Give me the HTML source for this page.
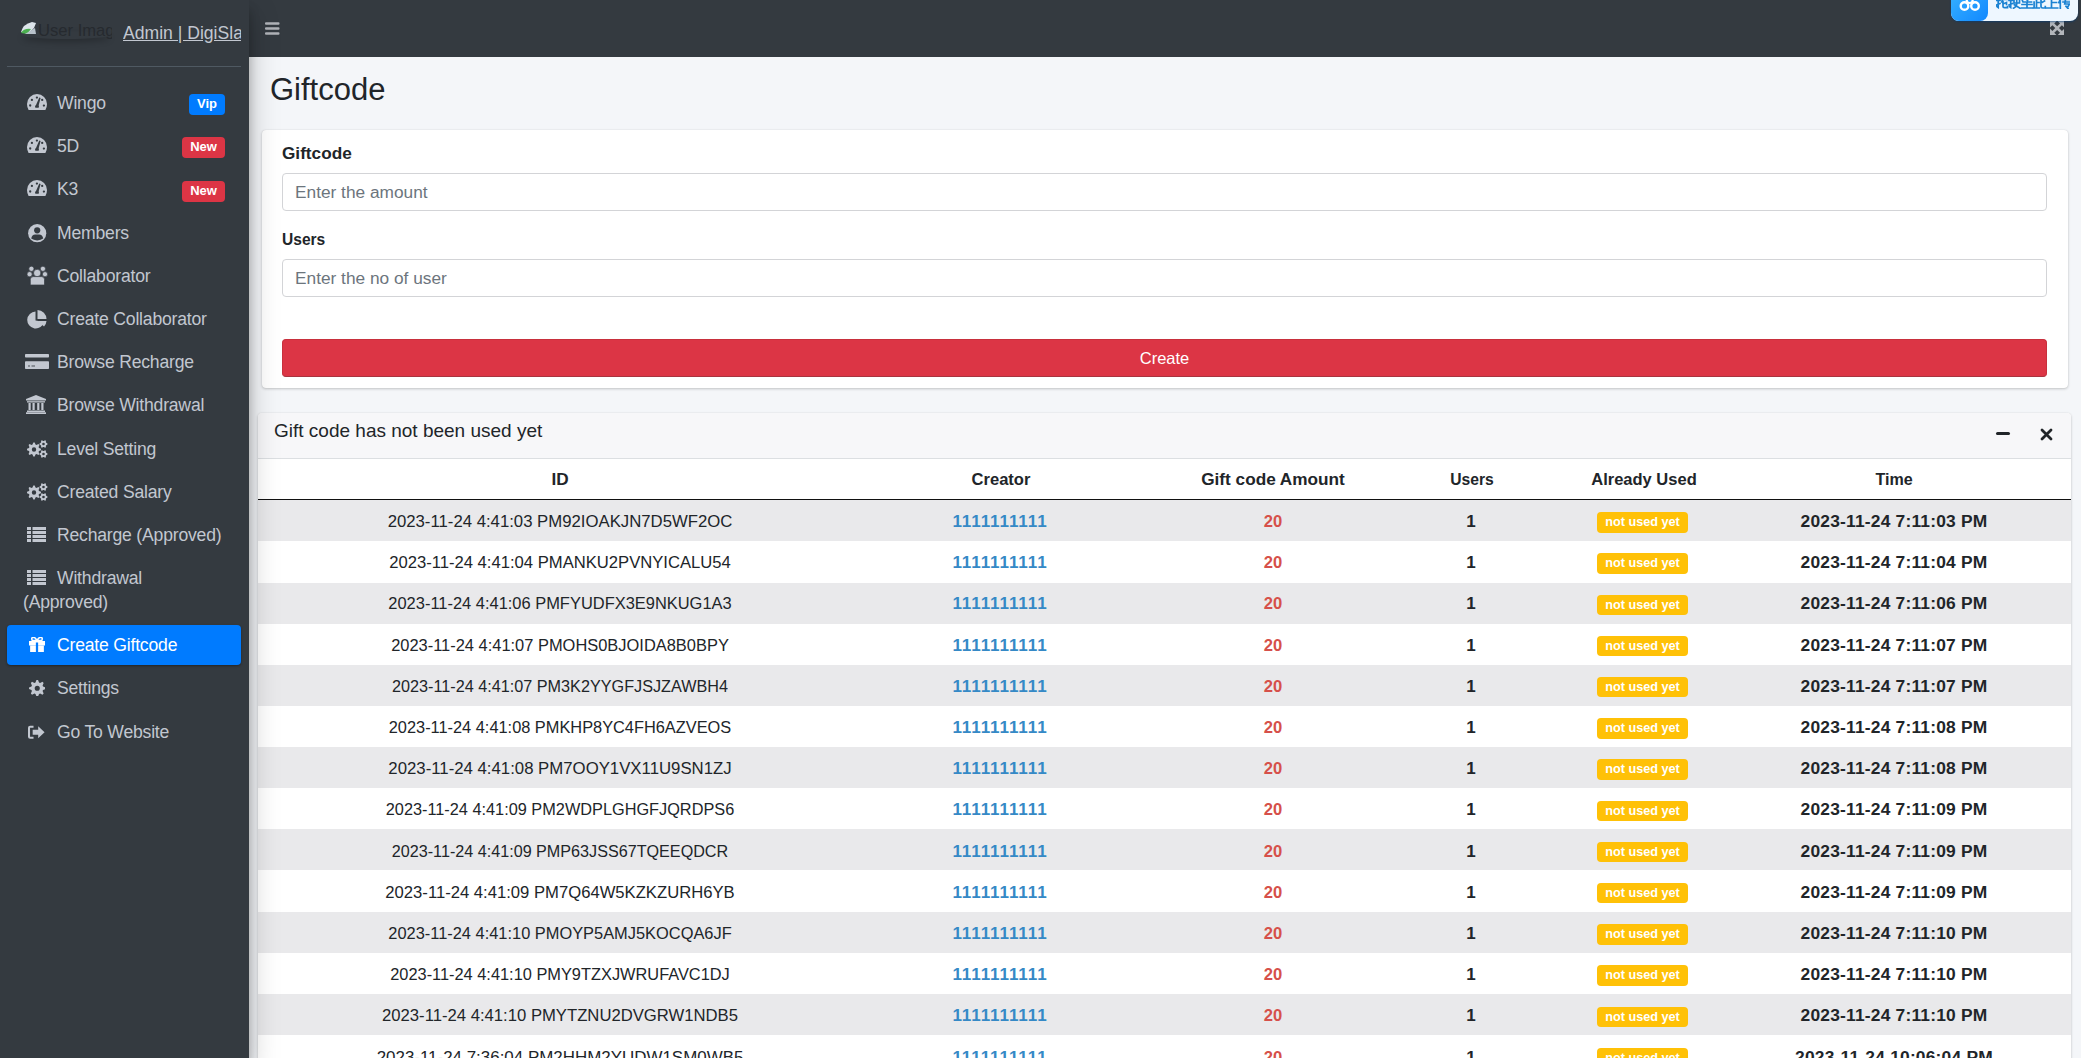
<!DOCTYPE html>
<html><head><meta charset="utf-8">
<style>
*{box-sizing:border-box;margin:0;padding:0}
html,body{width:2081px;height:1058px;overflow:hidden;background:#f4f6f9;font-family:"Liberation Sans",sans-serif;position:relative}
.abs{position:absolute}
#sidebar{position:absolute;left:0;top:0;width:249px;height:1058px;background:#343a40;box-shadow:0 14px 28px rgba(0,0,0,.25),0 10px 10px rgba(0,0,0,.22);z-index:3}
#navbar{position:absolute;left:249px;top:0;width:1832px;height:57px;background:#343a40;z-index:2}
.sbt{position:absolute;left:57px;height:24px;line-height:24px;font-size:17.6px;letter-spacing:-0.2px;color:#c2c7d0;white-space:nowrap}
.badge{position:absolute;font-weight:bold;color:#fff;border-radius:4px;text-align:center}
.card{position:absolute;background:#fff;border-radius:4px;box-shadow:0 0 1px rgba(0,0,0,.125),0 1px 3px rgba(0,0,0,.2)}
.lbl{position:absolute;font-weight:bold;font-size:17.2px;color:#212529;line-height:22px;white-space:nowrap}
.inp{position:absolute;border:1px solid #d3d4d7;border-radius:4px;background:#fff}
.ph{position:absolute;left:12px;top:0;line-height:36px;font-size:17.3px;color:#6c757d;white-space:nowrap}
.th{position:absolute;top:46px;width:300px;height:41px;line-height:41px;text-align:center;font-weight:bold;font-size:17.2px;color:#212529;white-space:nowrap}
.td{position:absolute;width:300px;height:41px;line-height:41px;text-align:center;font-size:16.7px;color:#212529;white-space:nowrap}
.cr{color:#3589c6;font-weight:bold;font-size:17px;letter-spacing:0.9px}
.am{color:#d6504a;font-weight:bold;font-size:16.6px}
.us{font-weight:bold;font-size:17px}
.tm{font-weight:bold;font-size:17.4px;letter-spacing:0.2px}
.yb{position:absolute;width:91px;height:20.5px;line-height:21px;background:#ffc107;color:#fff;font-weight:bold;font-size:12.7px;border-radius:4px;text-align:center;white-space:nowrap}
</style></head>
<body>
<div id="sidebar">
  <div class="abs" style="left:22px;top:31px;width:88px;height:8px;border-radius:50%;box-shadow:0 3px 6px rgba(0,0,0,.25);"></div>
  <svg class="abs" style="left:20px;top:21px" width="17" height="14" viewBox="0 0 17 14"><path d="M1 11 Q3 3 12 1 L16 2 L14 7 L8 13 Z" fill="#dde4ea"/><path d="M1 12 Q4 7 11 8 L7 13 Z" fill="#4caf50"/><path d="M5 13 L15 7 L16 13 Z" fill="#b8c2cb"/></svg>
  <div class="abs" style="left:38px;top:19px;font-size:16.6px;line-height:24px;color:#262a2f;white-space:nowrap;width:74px;overflow:hidden">User Image</div>
  <div class="abs" style="left:123px;top:21px;font-size:17.6px;line-height:24px;color:#c2c7d0;text-decoration:underline;white-space:nowrap;width:118px;overflow:hidden">Admin | DigiSlash</div>
  <div class="abs" style="left:7px;top:66px;width:234px;height:1px;background:#4f5962"></div>
  <svg class="abs" style="left:27px;top:94px" width="20" height="16" viewBox="0 0 20 16">
<path d="M1.6 16 Q0 13.2 0 10 A10 10 0 0 1 20 10 Q20 13.2 18.4 16 Z" fill="#c2c7d0"/>
<circle cx="3.2" cy="11.5" r="1.15" fill="#343a40"/><circle cx="4.9" cy="5.9" r="1.15" fill="#343a40"/><circle cx="9.9" cy="3.6" r="1.15" fill="#343a40"/><circle cx="15.2" cy="5.9" r="1.15" fill="#343a40"/><circle cx="16.9" cy="11.6" r="1.15" fill="#343a40"/>
<path d="M8.6 12 L12.3 3.6 L13.6 4 L11.5 12Z" fill="#343a40"/><rect x="8.1" y="11.4" width="3.8" height="2.3" rx="0.6" fill="#343a40"/></svg><div class="sbt" style="top:91px;color:#c2c7d0">Wingo</div><div class="badge" style="left:189px;top:94px;width:36px;height:21px;line-height:19px;background:#007bff;font-size:13px">Vip</div><svg class="abs" style="left:27px;top:137px" width="20" height="16" viewBox="0 0 20 16">
<path d="M1.6 16 Q0 13.2 0 10 A10 10 0 0 1 20 10 Q20 13.2 18.4 16 Z" fill="#c2c7d0"/>
<circle cx="3.2" cy="11.5" r="1.15" fill="#343a40"/><circle cx="4.9" cy="5.9" r="1.15" fill="#343a40"/><circle cx="9.9" cy="3.6" r="1.15" fill="#343a40"/><circle cx="15.2" cy="5.9" r="1.15" fill="#343a40"/><circle cx="16.9" cy="11.6" r="1.15" fill="#343a40"/>
<path d="M8.6 12 L12.3 3.6 L13.6 4 L11.5 12Z" fill="#343a40"/><rect x="8.1" y="11.4" width="3.8" height="2.3" rx="0.6" fill="#343a40"/></svg><div class="sbt" style="top:134px;color:#c2c7d0">5D</div><div class="badge" style="left:182px;top:137px;width:43px;height:21px;line-height:19px;background:#dc3545;font-size:13px">New</div><svg class="abs" style="left:27px;top:180px" width="20" height="16" viewBox="0 0 20 16">
<path d="M1.6 16 Q0 13.2 0 10 A10 10 0 0 1 20 10 Q20 13.2 18.4 16 Z" fill="#c2c7d0"/>
<circle cx="3.2" cy="11.5" r="1.15" fill="#343a40"/><circle cx="4.9" cy="5.9" r="1.15" fill="#343a40"/><circle cx="9.9" cy="3.6" r="1.15" fill="#343a40"/><circle cx="15.2" cy="5.9" r="1.15" fill="#343a40"/><circle cx="16.9" cy="11.6" r="1.15" fill="#343a40"/>
<path d="M8.6 12 L12.3 3.6 L13.6 4 L11.5 12Z" fill="#343a40"/><rect x="8.1" y="11.4" width="3.8" height="2.3" rx="0.6" fill="#343a40"/></svg><div class="sbt" style="top:177px;color:#c2c7d0">K3</div><div class="badge" style="left:182px;top:181px;width:43px;height:21px;line-height:19px;background:#dc3545;font-size:13px">New</div><svg class="abs" style="left:27.8px;top:223.6px" width="19" height="19" viewBox="0 0 19 19">
<circle cx="9.2" cy="9.2" r="9.1" fill="#c2c7d0"/><circle cx="9.2" cy="6.3" r="3.1" fill="#343a40"/>
<path d="M3.2 14.6 Q4 10.5 7.2 10.5 L11.2 10.5 Q14.4 10.5 15.2 14.6 Q13 16.4 9.2 16.4 Q5.4 16.4 3.2 14.6Z" fill="#343a40"/></svg><div class="sbt" style="top:221px;color:#c2c7d0">Members</div><svg class="abs" style="left:26.7px;top:266.2px" width="21" height="19" viewBox="0 0 21 19">
<g stroke="#343a40" stroke-width="0.7" fill="#c2c7d0">
<circle cx="4.4" cy="2.8" r="2.6"/><circle cx="15.9" cy="2.8" r="2.6"/>
<circle cx="2.6" cy="8.2" r="2.6"/><circle cx="18.0" cy="8.2" r="2.6"/>
<circle cx="10.2" cy="7.0" r="3.7"/>
<path d="M3.3 19 L3.3 13.5 Q3.3 10.6 6.3 10.6 L14.5 10.6 Q17.5 10.6 17.5 13.5 L17.5 19Z"/></g></svg><div class="sbt" style="top:264px;color:#c2c7d0">Collaborator</div><svg class="abs" style="left:27px;top:310px" width="20" height="19" viewBox="0 0 20 19">
<path d="M8.5 1.5 L8.5 10.5 L17 12 A8.5 8.5 0 1 1 8.5 1.5Z" fill="#c2c7d0"/>
<path d="M10.5 0 A9 9 0 0 1 19.5 9 L10.5 9Z" fill="#c2c7d0"/><path d="M11 11 L19.5 11 A9 9 0 0 1 17 16.5Z" fill="#c2c7d0"/></svg><div class="sbt" style="top:307px;color:#c2c7d0">Create Collaborator</div><svg class="abs" style="left:25px;top:354.2px" width="24" height="16" viewBox="0 0 24 16">
<rect x="0" y="0" width="24" height="3.6" rx="0.8" fill="#c2c7d0"/><rect x="0" y="7.2" width="24" height="7.8" rx="0.8" fill="#c2c7d0"/>
<rect x="3" y="11.4" width="2" height="1.2" fill="#343a40" opacity="0.7"/><rect x="6.5" y="11.4" width="3.5" height="1.2" fill="#343a40" opacity="0.7"/></svg><div class="sbt" style="top:350px;color:#c2c7d0">Browse Recharge</div><svg class="abs" style="left:26px;top:395.2px" width="20" height="19" viewBox="0 0 20 19">
<path d="M10 0 L20 4 L20 5.5 L0 5.5 L0 4Z" fill="#c2c7d0"/><rect x="1" y="6.2" width="18" height="1.3" fill="#c2c7d0"/>
<rect x="2.5" y="8" width="2.2" height="7" fill="#c2c7d0"/><rect x="6.5" y="8" width="2.2" height="7" fill="#c2c7d0"/><rect x="11.2" y="8" width="2.2" height="7" fill="#c2c7d0"/><rect x="15.3" y="8" width="2.2" height="7" fill="#c2c7d0"/>
<rect x="1" y="15.5" width="18" height="1.5" fill="#c2c7d0"/><rect x="0" y="17.3" width="20" height="1.7" fill="#c2c7d0"/></svg><div class="sbt" style="top:393px;color:#c2c7d0">Browse Withdrawal</div><svg class="abs" style="left:27px;top:440px" width="21" height="18" viewBox="0 0 21 18">
<path fill-rule="evenodd" d="M13.97 8.81 L13.97 10.19 L11.98 11.01 L11.59 11.95 L12.41 13.94 L11.44 14.91 L9.45 14.09 L8.51 14.48 L7.69 16.47 L6.31 16.47 L5.49 14.48 L4.55 14.09 L2.56 14.91 L1.59 13.94 L2.41 11.95 L2.02 11.01 L0.03 10.19 L0.03 8.81 L2.02 7.99 L2.41 7.05 L1.59 5.06 L2.56 4.09 L4.55 4.91 L5.49 4.52 L6.31 2.53 L7.69 2.53 L8.51 4.52 L9.45 4.91 L11.44 4.09 L12.41 5.06 L11.59 7.05 L11.98 7.99Z M9.20 9.50 A2.2 2.2 0 1 0 4.80 9.50 A2.2 2.2 0 1 0 9.20 9.50Z" fill="#c2c7d0"/>
<path fill-rule="evenodd" d="M20.47 3.48 L20.47 4.52 L19.27 5.15 L18.88 5.83 L18.94 7.17 L18.03 7.70 L16.89 6.97 L16.11 6.97 L14.97 7.70 L14.06 7.17 L14.12 5.83 L13.73 5.15 L12.53 4.52 L12.53 3.48 L13.73 2.85 L14.12 2.17 L14.06 0.83 L14.97 0.30 L16.11 1.03 L16.89 1.03 L18.03 0.30 L18.94 0.83 L18.88 2.17 L19.27 2.85Z M17.80 4.00 A1.3 1.3 0 1 0 15.20 4.00 A1.3 1.3 0 1 0 17.80 4.00Z" fill="#c2c7d0"/>
<path fill-rule="evenodd" d="M20.47 13.48 L20.47 14.52 L19.27 15.15 L18.88 15.83 L18.94 17.17 L18.03 17.70 L16.89 16.97 L16.11 16.97 L14.97 17.70 L14.06 17.17 L14.12 15.83 L13.73 15.15 L12.53 14.52 L12.53 13.48 L13.73 12.85 L14.12 12.17 L14.06 10.83 L14.97 10.30 L16.11 11.03 L16.89 11.03 L18.03 10.30 L18.94 10.83 L18.88 12.17 L19.27 12.85Z M17.80 14.00 A1.3 1.3 0 1 0 15.20 14.00 A1.3 1.3 0 1 0 17.80 14.00Z" fill="#c2c7d0"/></svg><div class="sbt" style="top:437px;color:#c2c7d0">Level Setting</div><svg class="abs" style="left:27px;top:483px" width="21" height="18" viewBox="0 0 21 18">
<path fill-rule="evenodd" d="M13.97 8.81 L13.97 10.19 L11.98 11.01 L11.59 11.95 L12.41 13.94 L11.44 14.91 L9.45 14.09 L8.51 14.48 L7.69 16.47 L6.31 16.47 L5.49 14.48 L4.55 14.09 L2.56 14.91 L1.59 13.94 L2.41 11.95 L2.02 11.01 L0.03 10.19 L0.03 8.81 L2.02 7.99 L2.41 7.05 L1.59 5.06 L2.56 4.09 L4.55 4.91 L5.49 4.52 L6.31 2.53 L7.69 2.53 L8.51 4.52 L9.45 4.91 L11.44 4.09 L12.41 5.06 L11.59 7.05 L11.98 7.99Z M9.20 9.50 A2.2 2.2 0 1 0 4.80 9.50 A2.2 2.2 0 1 0 9.20 9.50Z" fill="#c2c7d0"/>
<path fill-rule="evenodd" d="M20.47 3.48 L20.47 4.52 L19.27 5.15 L18.88 5.83 L18.94 7.17 L18.03 7.70 L16.89 6.97 L16.11 6.97 L14.97 7.70 L14.06 7.17 L14.12 5.83 L13.73 5.15 L12.53 4.52 L12.53 3.48 L13.73 2.85 L14.12 2.17 L14.06 0.83 L14.97 0.30 L16.11 1.03 L16.89 1.03 L18.03 0.30 L18.94 0.83 L18.88 2.17 L19.27 2.85Z M17.80 4.00 A1.3 1.3 0 1 0 15.20 4.00 A1.3 1.3 0 1 0 17.80 4.00Z" fill="#c2c7d0"/>
<path fill-rule="evenodd" d="M20.47 13.48 L20.47 14.52 L19.27 15.15 L18.88 15.83 L18.94 17.17 L18.03 17.70 L16.89 16.97 L16.11 16.97 L14.97 17.70 L14.06 17.17 L14.12 15.83 L13.73 15.15 L12.53 14.52 L12.53 13.48 L13.73 12.85 L14.12 12.17 L14.06 10.83 L14.97 10.30 L16.11 11.03 L16.89 11.03 L18.03 10.30 L18.94 10.83 L18.88 12.17 L19.27 12.85Z M17.80 14.00 A1.3 1.3 0 1 0 15.20 14.00 A1.3 1.3 0 1 0 17.80 14.00Z" fill="#c2c7d0"/></svg><div class="sbt" style="top:480px;color:#c2c7d0">Created Salary</div><svg class="abs" style="left:27px;top:527px" width="19" height="15" viewBox="0 0 19 15"><rect x="0" y="0" width="4" height="3" fill="#c2c7d0"/><rect x="5.5" y="0" width="13.5" height="3" fill="#c2c7d0"/><rect x="0" y="4" width="4" height="3" fill="#c2c7d0"/><rect x="5.5" y="4" width="13.5" height="3" fill="#c2c7d0"/><rect x="0" y="8" width="4" height="3" fill="#c2c7d0"/><rect x="5.5" y="8" width="13.5" height="3" fill="#c2c7d0"/><rect x="0" y="12" width="4" height="3" fill="#c2c7d0"/><rect x="5.5" y="12" width="13.5" height="3" fill="#c2c7d0"/></svg><div class="sbt" style="top:523px;color:#c2c7d0">Recharge (Approved)</div><svg class="abs" style="left:27px;top:570px" width="19" height="15" viewBox="0 0 19 15"><rect x="0" y="0" width="4" height="3" fill="#c2c7d0"/><rect x="5.5" y="0" width="13.5" height="3" fill="#c2c7d0"/><rect x="0" y="4" width="4" height="3" fill="#c2c7d0"/><rect x="5.5" y="4" width="13.5" height="3" fill="#c2c7d0"/><rect x="0" y="8" width="4" height="3" fill="#c2c7d0"/><rect x="5.5" y="8" width="13.5" height="3" fill="#c2c7d0"/><rect x="0" y="12" width="4" height="3" fill="#c2c7d0"/><rect x="5.5" y="12" width="13.5" height="3" fill="#c2c7d0"/></svg><div class="sbt" style="top:566px;color:#c2c7d0">Withdrawal</div><div class="sbt" style="left:23px;top:590px">(Approved)</div><div class="abs" style="left:7px;top:625px;width:234px;height:40px;background:#007bff;border-radius:4px;box-shadow:0 1px 3px rgba(0,0,0,.12),0 1px 2px rgba(0,0,0,.24)"></div><svg class="abs" style="left:29px;top:637px" width="16" height="15" viewBox="0 0 17 15" preserveAspectRatio="none">
<path d="M3.5 3.6 Q2 0.5 4.5 0.3 Q6.8 0.3 8.5 3.6Z M13.5 3.6 Q15 0.5 12.5 0.3 Q10.2 0.3 8.5 3.6Z" fill="none" stroke="#fff" stroke-width="1.6"/>
<rect x="0" y="4" width="17" height="4.5" fill="#fff"/><rect x="1.2" y="8.5" width="14.6" height="6.5" fill="#fff"/>
<rect x="7.3" y="5.5" width="2.4" height="9.5" fill="#007bff"/></svg><div class="sbt" style="top:633px;color:#fff">Create Giftcode</div><svg class="abs" style="left:28.6px;top:679.8px" width="16.5" height="16.5" viewBox="0 0 18 18">
<path fill-rule="evenodd" d="M17.96 8.12 L17.96 9.88 L15.32 10.92 L14.82 12.11 L15.96 14.71 L14.71 15.96 L12.11 14.82 L10.92 15.32 L9.88 17.96 L8.12 17.96 L7.08 15.32 L5.89 14.82 L3.29 15.96 L2.04 14.71 L3.18 12.11 L2.68 10.92 L0.04 9.88 L0.04 8.12 L2.68 7.08 L3.18 5.89 L2.04 3.29 L3.29 2.04 L5.89 3.18 L7.08 2.68 L8.12 0.04 L9.88 0.04 L10.92 2.68 L12.11 3.18 L14.71 2.04 L15.96 3.29 L14.82 5.89 L15.32 7.08Z M11.80 9.00 A2.8 2.8 0 1 0 6.20 9.00 A2.8 2.8 0 1 0 11.80 9.00Z" fill="#c2c7d0"/></svg><div class="sbt" style="top:676px;color:#c2c7d0">Settings</div><svg class="abs" style="left:27.8px;top:724.6px" width="17" height="14.5" viewBox="0 0 20 16">
<path d="M6.5 1.5 L2.5 1.5 Q1.2 1.5 1.2 2.8 L1.2 13.2 Q1.2 14.5 2.5 14.5 L6.5 14.5" fill="none" stroke="#c2c7d0" stroke-width="2.4"/>
<path d="M12 1 L19.5 8 L12 15 L12 11 L5.5 11 L5.5 5 L12 5Z" fill="#c2c7d0"/></svg><div class="sbt" style="top:720px;color:#c2c7d0">Go To Website</div>
</div>
<div id="navbar">
  <svg class="abs" style="left:16px;top:21px" width="14.5" height="14" viewBox="0 0 14.5 14"><rect y="1.3" width="14.5" height="2.5" rx="1" fill="#b0b3b8"/><rect y="6.3" width="14.5" height="2.5" rx="1" fill="#b0b3b8"/><rect y="11.3" width="14.5" height="2.5" rx="1" fill="#b0b3b8"/></svg>
  <svg class="abs" style="left:1800.8px;top:20.9px" width="14.3" height="14.2" viewBox="0 0 14.3 14.2"><path fill="#b3b6bb" d="M0 0 L6.65 0 L4.25 2.4 L7.15 5.3 L10.05 2.4 L7.65 0 L14.3 0 L14.3 6.6 L11.9 4.2 L9 7.1 L11.9 10 L14.3 7.6 L14.3 14.2 L7.65 14.2 L10.05 11.8 L7.15 8.9 L4.25 11.8 L6.65 14.2 L0 14.2 L0 7.6 L2.4 10 L5.3 7.1 L2.4 4.2 L0 6.6Z"/></svg>
  <div class="abs" style="left:1702px;top:-12px;width:127px;height:33px;border-radius:8px;background:#eef7ff;box-shadow:0 1px 2px rgba(0,60,120,.6);overflow:hidden">
    <div class="abs" style="left:0;top:0;width:37px;height:33px;background:linear-gradient(135deg,#39b3ff,#1188ff);border-radius:0 0 8px 0"></div>
    <svg class="abs" style="left:8px;top:10px" width="22" height="14" viewBox="0 0 22 14"><circle cx="5.5" cy="8" r="3.8" fill="none" stroke="#fff" stroke-width="2.4"/><circle cx="16" cy="8" r="3.8" fill="none" stroke="#fff" stroke-width="2.4"/><circle cx="10.7" cy="2" r="3" fill="none" stroke="#fff" stroke-width="2.2"/></svg>
    <div class="abs" style="left:45px;top:11px;width:74px;height:10px;overflow:hidden">
      <svg style="display:block" width="74" height="10" viewBox="0 0 74 10"><g fill="none" stroke="#1b82d2" stroke-width="1.7" stroke-linecap="square">
<path d="M0.5 1.5H4 M2.2 -2V8.5L1 7.6 M0.5 6L4 4.5 M5.5 0.5H11.5 M7.5 -2L5.8 3 M7 2.5V7.5Q7 8.6 8.5 8.6H11.5V7.5 M7 5L10.5 3.5V5.5"/>
<path transform="translate(12.5 0)" d="M0.5 1.5H4 M2.2 -2V8.5L1 7.6 M0.5 6L4 4.5 M5.5 0V4H11V0 M8.2 -2V5 Q8 8 5 9.2 M5.8 5.8L11.5 9.2"/>
<path transform="translate(25 0)" d="M1 0.5L2 3H10.5 M4 -1L6.5 1.5 M1 5.5H11 M6 3V9 M0.5 9H11.5"/>
<path transform="translate(37.5 0)" d="M3 -2V9 M3 3.5H5.5 M0.6 3V9 M0 9H5.8 M7.5 -2V7.5Q7.5 9 9.2 9H11.8V7.5 M7.5 4L11 2"/>
<path transform="translate(50 0)" d="M5.5 -2V9 M5.5 3.5H10.5 M0.3 9H11.7"/>
<path transform="translate(62.5 0)" d="M2.5 -1L0.3 3.5 M1.8 2V9.5 M4.5 0.5H11.5 M4.5 3H11.5 M7.5 -2L6.2 5H11L9.5 7.5 M7.5 7.3L9.5 9.5"/>
</g></svg>
    </div>
  </div>
</div>
<div class="abs" style="left:270px;top:69px;font-size:31px;line-height:42px;color:#212529;white-space:nowrap">Giftcode</div>

<div class="card" style="left:261.5px;top:130px;width:1806px;height:257.6px">
  <div class="lbl" style="left:20.5px;top:11.5px">Giftcode</div>
  <div class="inp" style="left:20.5px;top:43px;width:1765px;height:38px"><div class="ph">Enter the amount</div></div>
  <div class="lbl" style="left:20.5px;top:97.5px;transform:scaleX(0.905);transform-origin:0 0">Users</div>
  <div class="inp" style="left:20.5px;top:129px;width:1765px;height:38px"><div class="ph">Enter the no of user</div></div>
  <div class="abs" style="left:20.5px;top:209px;width:1765px;height:38px;background:#dc3545;border:1px solid #c8303d;border-bottom-color:#a8343f;border-radius:4px;color:#fff;text-align:center;line-height:36px;font-size:16.5px">Create</div>
</div>

<div class="card" style="left:258px;top:412.5px;width:1813px;height:700px;overflow:hidden">
  <div class="abs" style="left:0;top:0;width:1813px;height:46px;background:#f7f7f9;border-bottom:1px solid #dcdfe2"></div>
  <div class="abs" style="left:16px;top:6px;font-size:19px;line-height:24px;color:#212529;white-space:nowrap">Gift code has not been used yet</div>
  <div class="abs" style="left:1738.4px;top:19.8px;width:14px;height:3.2px;border-radius:1.6px;background:#212529"></div>
  <svg class="abs" style="left:1782px;top:15.5px" width="13" height="13" viewBox="0 0 13 13"><path d="M2 2 L11 11 M11 2 L2 11" stroke="#212529" stroke-width="2.8" stroke-linecap="round"/></svg>
  <div class="th" style="left:152px;transform:scaleX(1.0)">ID</div><div class="th" style="left:593.0px;transform:scaleX(0.963)">Creator</div><div class="th" style="left:865px;transform:scaleX(1.0)">Gift code Amount</div><div class="th" style="left:1063.5px;transform:scaleX(0.912)">Users</div><div class="th" style="left:1236.0px;transform:scaleX(0.96)">Already Used</div><div class="th" style="left:1485.5px;transform:scaleX(0.935)">Time</div><div class="abs" style="left:0;top:86px;width:1813px;height:2.5px;background:#111"></div><div class="abs" style="left:0;top:87.85px;width:1813px;height:41.12px;background:#e9e9eb"></div><div class="td" style="left:52px;top:88.45px;width:500px;transform:scaleX(1.0026)">2023-11-24 4:41:03 PM92IOAKJN7D5WF2OC</div><div class="td cr" style="left:592px;top:88.45px">1111111111</div><div class="td am" style="left:865px;top:88.45px">20</div><div class="td us" style="left:1063px;top:88.45px">1</div><div class="yb" style="left:1339px;top:99.65px">not used yet</div><div class="td tm" style="left:1486px;top:88.45px">2023-11-24 7:11:03 PM</div><div class="abs" style="left:0;top:128.98px;width:1813px;height:41.12px;background:#fff"></div><div class="td" style="left:52px;top:129.65px;width:500px;transform:scaleX(0.9965)">2023-11-24 4:41:04 PMANKU2PVNYICALU54</div><div class="td cr" style="left:592px;top:129.65px">1111111111</div><div class="td am" style="left:865px;top:129.65px">20</div><div class="td us" style="left:1063px;top:129.65px">1</div><div class="yb" style="left:1339px;top:140.85px">not used yet</div><div class="td tm" style="left:1486px;top:129.65px">2023-11-24 7:11:04 PM</div><div class="abs" style="left:0;top:170.10px;width:1813px;height:41.12px;background:#e9e9eb"></div><div class="td" style="left:52px;top:170.85px;width:500px;transform:scaleX(0.9853)">2023-11-24 4:41:06 PMFYUDFX3E9NKUG1A3</div><div class="td cr" style="left:592px;top:170.85px">1111111111</div><div class="td am" style="left:865px;top:170.85px">20</div><div class="td us" style="left:1063px;top:170.85px">1</div><div class="yb" style="left:1339px;top:182.05px">not used yet</div><div class="td tm" style="left:1486px;top:170.85px">2023-11-24 7:11:06 PM</div><div class="abs" style="left:0;top:211.23px;width:1813px;height:41.12px;background:#fff"></div><div class="td" style="left:52px;top:212.05px;width:500px;transform:scaleX(0.9848)">2023-11-24 4:41:07 PMOHS0BJOIDA8B0BPY</div><div class="td cr" style="left:592px;top:212.05px">1111111111</div><div class="td am" style="left:865px;top:212.05px">20</div><div class="td us" style="left:1063px;top:212.05px">1</div><div class="yb" style="left:1339px;top:223.25px">not used yet</div><div class="td tm" style="left:1486px;top:212.05px">2023-11-24 7:11:07 PM</div><div class="abs" style="left:0;top:252.35px;width:1813px;height:41.12px;background:#e9e9eb"></div><div class="td" style="left:52px;top:253.25px;width:500px;transform:scaleX(0.9711)">2023-11-24 4:41:07 PM3K2YYGFJSJZAWBH4</div><div class="td cr" style="left:592px;top:253.25px">1111111111</div><div class="td am" style="left:865px;top:253.25px">20</div><div class="td us" style="left:1063px;top:253.25px">1</div><div class="yb" style="left:1339px;top:264.45px">not used yet</div><div class="td tm" style="left:1486px;top:253.25px">2023-11-24 7:11:07 PM</div><div class="abs" style="left:0;top:293.48px;width:1813px;height:41.12px;background:#fff"></div><div class="td" style="left:52px;top:294.45px;width:500px;transform:scaleX(0.9802)">2023-11-24 4:41:08 PMKHP8YC4FH6AZVEOS</div><div class="td cr" style="left:592px;top:294.45px">1111111111</div><div class="td am" style="left:865px;top:294.45px">20</div><div class="td us" style="left:1063px;top:294.45px">1</div><div class="yb" style="left:1339px;top:305.65px">not used yet</div><div class="td tm" style="left:1486px;top:294.45px">2023-11-24 7:11:08 PM</div><div class="abs" style="left:0;top:334.60px;width:1813px;height:41.12px;background:#e9e9eb"></div><div class="td" style="left:52px;top:335.65px;width:500px;transform:scaleX(1.0047)">2023-11-24 4:41:08 PM7OOY1VX11U9SN1ZJ</div><div class="td cr" style="left:592px;top:335.65px">1111111111</div><div class="td am" style="left:865px;top:335.65px">20</div><div class="td us" style="left:1063px;top:335.65px">1</div><div class="yb" style="left:1339px;top:346.85px">not used yet</div><div class="td tm" style="left:1486px;top:335.65px">2023-11-24 7:11:08 PM</div><div class="abs" style="left:0;top:375.73px;width:1813px;height:41.12px;background:#fff"></div><div class="td" style="left:52px;top:376.85px;width:500px;transform:scaleX(0.9767)">2023-11-24 4:41:09 PM2WDPLGHGFJQRDPS6</div><div class="td cr" style="left:592px;top:376.85px">1111111111</div><div class="td am" style="left:865px;top:376.85px">20</div><div class="td us" style="left:1063px;top:376.85px">1</div><div class="yb" style="left:1339px;top:388.05px">not used yet</div><div class="td tm" style="left:1486px;top:376.85px">2023-11-24 7:11:09 PM</div><div class="abs" style="left:0;top:416.85px;width:1813px;height:41.12px;background:#e9e9eb"></div><div class="td" style="left:52px;top:418.05px;width:500px;transform:scaleX(0.9679)">2023-11-24 4:41:09 PMP63JSS67TQEEQDCR</div><div class="td cr" style="left:592px;top:418.05px">1111111111</div><div class="td am" style="left:865px;top:418.05px">20</div><div class="td us" style="left:1063px;top:418.05px">1</div><div class="yb" style="left:1339px;top:429.25px">not used yet</div><div class="td tm" style="left:1486px;top:418.05px">2023-11-24 7:11:09 PM</div><div class="abs" style="left:0;top:457.98px;width:1813px;height:41.12px;background:#fff"></div><div class="td" style="left:52px;top:459.25px;width:500px;transform:scaleX(0.9971)">2023-11-24 4:41:09 PM7Q64W5KZKZURH6YB</div><div class="td cr" style="left:592px;top:459.25px">1111111111</div><div class="td am" style="left:865px;top:459.25px">20</div><div class="td us" style="left:1063px;top:459.25px">1</div><div class="yb" style="left:1339px;top:470.45px">not used yet</div><div class="td tm" style="left:1486px;top:459.25px">2023-11-24 7:11:09 PM</div><div class="abs" style="left:0;top:499.10px;width:1813px;height:41.12px;background:#e9e9eb"></div><div class="td" style="left:52px;top:500.45px;width:500px;transform:scaleX(0.9828)">2023-11-24 4:41:10 PMOYP5AMJ5KOCQA6JF</div><div class="td cr" style="left:592px;top:500.45px">1111111111</div><div class="td am" style="left:865px;top:500.45px">20</div><div class="td us" style="left:1063px;top:500.45px">1</div><div class="yb" style="left:1339px;top:511.65px">not used yet</div><div class="td tm" style="left:1486px;top:500.45px">2023-11-24 7:11:10 PM</div><div class="abs" style="left:0;top:540.23px;width:1813px;height:41.12px;background:#fff"></div><div class="td" style="left:52px;top:541.65px;width:500px;transform:scaleX(0.9806)">2023-11-24 4:41:10 PMY9TZXJWRUFAVC1DJ</div><div class="td cr" style="left:592px;top:541.65px">1111111111</div><div class="td am" style="left:865px;top:541.65px">20</div><div class="td us" style="left:1063px;top:541.65px">1</div><div class="yb" style="left:1339px;top:552.85px">not used yet</div><div class="td tm" style="left:1486px;top:541.65px">2023-11-24 7:11:10 PM</div><div class="abs" style="left:0;top:581.35px;width:1813px;height:41.12px;background:#e9e9eb"></div><div class="td" style="left:52px;top:582.85px;width:500px;transform:scaleX(0.9986)">2023-11-24 4:41:10 PMYTZNU2DVGRW1NDB5</div><div class="td cr" style="left:592px;top:582.85px">1111111111</div><div class="td am" style="left:865px;top:582.85px">20</div><div class="td us" style="left:1063px;top:582.85px">1</div><div class="yb" style="left:1339px;top:594.05px">not used yet</div><div class="td tm" style="left:1486px;top:582.85px">2023-11-24 7:11:10 PM</div><div class="abs" style="left:0;top:622.48px;width:1813px;height:41.12px;background:#fff"></div><div class="td" style="left:52px;top:624.05px;width:500px;transform:scaleX(1.0147)">2023-11-24 7:36:04 PM2HHM2YUDW1SM0WB5</div><div class="td cr" style="left:592px;top:624.05px">1111111111</div><div class="td am" style="left:865px;top:624.05px">20</div><div class="td us" style="left:1063px;top:624.05px">1</div><div class="yb" style="left:1339px;top:635.25px">not used yet</div><div class="td tm" style="left:1486px;top:624.05px">2023-11-24 10:06:04 PM</div>
</div>
</body></html>
